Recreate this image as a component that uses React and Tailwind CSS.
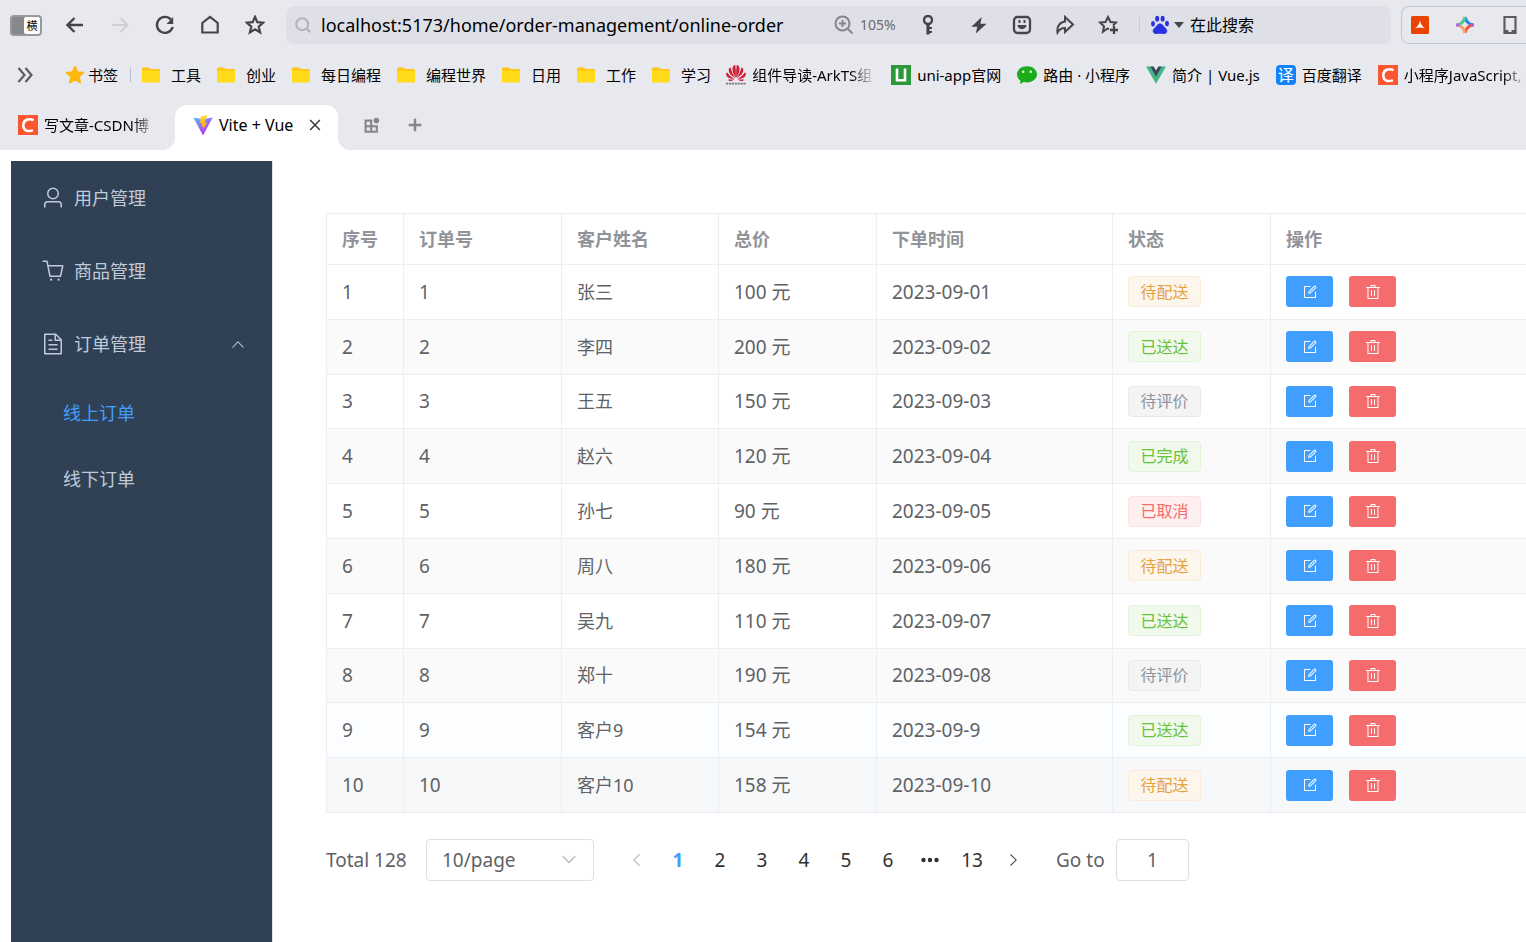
import { useState } from "react";
import clsx from "clsx";

const ORDERS = [
  { name: "张三", price: 100, date: "2023-09-01", status: "待配送" },
  { name: "李四", price: 200, date: "2023-09-02", status: "已送达" },
  { name: "王五", price: 150, date: "2023-09-03", status: "待评价" },
  { name: "赵六", price: 120, date: "2023-09-04", status: "已完成" },
  { name: "孙七", price: 90, date: "2023-09-05", status: "已取消" },
  { name: "周八", price: 180, date: "2023-09-06", status: "待配送" },
  { name: "吴九", price: 110, date: "2023-09-07", status: "已送达" },
  { name: "郑十", price: 190, date: "2023-09-08", status: "待评价" },
  { name: "客户9", price: 154, date: "2023-09-9", status: "已送达" },
  { name: "客户10", price: 158, date: "2023-09-10", status: "待配送" },
];

const TAG_STYLES = {
  待配送: "bg-[#fdf6ec] border-[#faecd8] text-[#e6a23c]",
  已送达: "bg-[#f0f9eb] border-[#e1f3d8] text-[#67c23a]",
  已完成: "bg-[#f0f9eb] border-[#e1f3d8] text-[#67c23a]",
  待评价: "bg-[#f4f4f5] border-[#e9e9eb] text-[#909399]",
  已取消: "bg-[#fef0f0] border-[#fde2e2] text-[#f56c6c]",
};

const ICONS = {
  user: "M512 512a192 192 0 1 0 0-384 192 192 0 0 0 0 384zm0 64a256 256 0 1 1 0-512 256 256 0 0 1 0 512zm320 320v-96a96 96 0 0 0-96-96H288a96 96 0 0 0-96 96v96a32 32 0 1 1-64 0v-96a160 160 0 0 1 160-160h448a160 160 0 0 1 160 160v96a32 32 0 1 1-64 0z",
  cart: "M432 928a48 48 0 1 1 0-96 48 48 0 0 1 0 96zm320 0a48 48 0 1 1 0-96 48 48 0 0 1 0 96zM96 128a32 32 0 0 1 0-64h160a32 32 0 0 1 31.36 25.728L320.64 256H928a32 32 0 0 1 31.296 38.72l-96 448A32 32 0 0 1 832 768H384a32 32 0 0 1-31.36-25.728L229.76 128H96zm314.24 576h395.904l82.304-384H333.44l76.8 384z",
  document: "M832 384H576V128H192v768h640V384zm-26.496-64L640 154.496V320h165.504zM160 64h480l256 256v608a32 32 0 0 1-32 32H160a32 32 0 0 1-32-32V96a32 32 0 0 1 32-32zm160 448h384v64H320v-64zm0-192h160v64H320v-64zm0 384h384v64H320v-64z",
  arrowUp: "m488.832 344.32-339.84 356.672a32 32 0 0 0 0 44.16l.384.384a29.44 29.44 0 0 0 42.688 0l320-335.872 319.872 335.872a29.44 29.44 0 0 0 42.688 0l.384-.384a32 32 0 0 0 0-44.16L535.168 344.32a32 32 0 0 0-46.336 0z",
  edit: "M832 512a32 32 0 1 1 64 0v352a32 32 0 0 1-32 32H160a32 32 0 0 1-32-32V160a32 32 0 0 1 32-32h352a32 32 0 0 1 0 64H192v640h640V512zm-362.048 42.24 52.8-7.552L847.104 222.4a32 32 0 1 0-45.248-45.248L477.44 501.44l-7.552 52.8zm422.4-422.4a96 96 0 0 1 0 135.808l-331.84 331.84a32 32 0 0 1-18.112 9.088L436.8 623.68a32 32 0 0 1-36.224-36.224l15.104-105.6a32 32 0 0 1 9.024-18.112l331.904-331.84a96 96 0 0 1 135.744 0z",
  trash: "M160 256H96a32 32 0 0 1 0-64h256V95.936a32 32 0 0 1 32-32h256a32 32 0 0 1 32 32V192h256a32 32 0 1 1 0 64h-64v672a32 32 0 0 1-32 32H192a32 32 0 0 1-32-32V256zm448-64v-64H416v64h192zM224 896h576V256H224v640zm192-128a32 32 0 0 1-32-32V416a32 32 0 0 1 64 0v320a32 32 0 0 1-32 32zm192 0a32 32 0 0 1-32-32V416a32 32 0 0 1 64 0v320a32 32 0 0 1-32 32z",
};

const Icon = ({ name, className }) => (
  <svg viewBox="0 0 1024 1024" fill="currentColor" className={clsx("shrink-0", className)} aria-hidden="true">
    <path d={ICONS[name]} />
  </svg>
);

// 20px stroked glyphs used in the browser bar
const Glyph = ({ children, className = "size-5", width = 2 }) => (
  <svg viewBox="0 0 20 20" fill="none" stroke="currentColor" strokeWidth={width} className={clsx("shrink-0", className)} aria-hidden="true">
    {children}
  </svg>
);

const STAR = "M10 1.8l2.3 5.4 5.9.5-4.5 3.9 1.4 5.8-5.1-3.1-5.1 3.1 1.4-5.8L1.8 7.7l5.9-.5z";

const FolderIcon = () => (
  <svg viewBox="0 0 20 20" className="size-5 shrink-0" aria-hidden="true">
    <path d="M1 4a1.500 1.500 0 0 1 1.500-1.500h5L9.500 4H17.500A1.500 1.500 0 0 1 19 5.500V8H1z" fill="#ffc20e" />
    <rect x="1" y="5.500" width="18" height="12" rx="1.200" fill="#ffdb1a" />
  </svg>
);

const HuaweiIcon = () => (
  <svg viewBox="0 0 20 20" className="size-5 shrink-0" aria-hidden="true">
    <g fill="#cf1f35">
      <path d="M9.700 13C7 9 6.200 6 6.600 2.500 7 .8 8 .2 9.200 0c.6 3 .8 8 .5 13z" />
      <path d="M10.300 13C13 9 13.800 6 13.400 2.500 13 .8 12 .2 10.800 0c-.6 3-.8 8-.5 13z" />
      <path d="M9.100 13.300C4.500 10.500 2.500 7.500 2.700 4.800c.1-1.300.9-2.200 1.700-2.600C5.500 6 7 10 9.100 13.300z" />
      <path d="M10.900 13.300c4.600-2.800 6.600-5.800 6.400-8.500-.1-1.300-.9-2.200-1.700-2.600C14.500 6 13 10 10.900 13.300z" />
      <path d="M8.600 14C4 13.800 1.200 12.600.4 10.500c-.5-1.500 0-2.700.5-3.300C3 10 5.700 12.500 8.600 14z" />
      <path d="M11.400 14c4.600-.2 7.400-1.400 8.200-3.500.5-1.500 0-2.700-.5-3.300-2.100 2.800-4.800 5.300-7.700 6.800z" />
      <path d="M8.400 14.600H1.900c.8 1.300 2 1.700 3.300 1.400 1-.2 2.300-.9 3.200-1.400zM11.600 14.600h6.500c-.8 1.300-2 1.700-3.300 1.400-1-.2-2.300-.9-3.200-1.400z" />
    </g>
    <path d="M0 18.700h20" stroke="#77787c" strokeWidth="1.800" strokeDasharray="2.200 .7" />
  </svg>
);

const UniIcon = () => (
  <svg viewBox="0 0 20 20" className="size-5 shrink-0" aria-hidden="true">
    <path fill="#2b9939" d="M0 0h20v20H0z" />
    <path d="M6 3.500v11.800h8V3.500" fill="none" stroke="#fff" strokeWidth="2.600" />
  </svg>
);

const WechatIcon = () => (
  <svg viewBox="0 0 20 20" className="size-5 shrink-0" aria-hidden="true">
    <path fill="#1aad19" d="M10 1.200c5.500 0 10 3.500 10 8.100s-4.500 8.100-10 8.100c-1.200 0-2.300-.2-3.300-.4L3 19l.5-3.200C1.400 14.300 0 12 0 9.300c0-4.600 4.500-8.100 10-8.100z" />
    <circle cx="6.300" cy="6.800" r="1.200" fill="#fff" />
    <circle cx="13.700" cy="6.800" r="1.200" fill="#fff" />
  </svg>
);

const VueIcon = () => (
  <svg viewBox="0 0 20 20" className="size-5 shrink-0" aria-hidden="true">
    <path d="M0 1.500h4l6 10.400 6-10.400h4L10 18.800z" fill="#41b883" />
    <path d="M4 1.500h3.700L10 5.500l2.300-4H16L10 11.900z" fill="#34495e" />
  </svg>
);

const TranslateIcon = () => (
  <span className="flex size-5 shrink-0 items-center justify-center rounded-sm bg-[#1283fa] text-base leading-none text-white">译</span>
);

const CsdnIcon = () => (
  <svg viewBox="0 0 20 20" className="size-5 shrink-0" aria-hidden="true">
    <path fill="#fc5531" d="M0 0h20v20H0z" />
    <path d="M15.600 5.200C11 2.800 5.300 4.700 5.200 10.300c0 5.400 5.200 7 9.700 4.800" fill="none" stroke="#fff" strokeWidth="2.500" />
  </svg>
);

const ViteIcon = () => (
  <svg viewBox="0 0 20 20" className="size-5 shrink-0" aria-hidden="true">
    <defs>
      <linearGradient id="vite-v" x1="0" y1="0" x2="12" y2="18" gradientUnits="userSpaceOnUse">
        <stop stopColor="#41d1ff" />
        <stop offset="1" stopColor="#bd34fe" />
      </linearGradient>
      <linearGradient id="vite-bolt" x1="9" y1="0" x2="11" y2="14" gradientUnits="userSpaceOnUse">
        <stop stopColor="#ffdd35" />
        <stop offset="1" stopColor="#ffa800" />
      </linearGradient>
    </defs>
    <path d="M.3 2.500 10 4.200l9.700-1.700L10.400 19.700a.5.5 0 0 1-.8 0z" fill="url(#vite-v)" />
    <path d="M14.300.2 7.600 1.500 7.200 8.800l2.200-.5-.6 3.600 1.800-.5-.9 4.300 4.400-8.200-2.500.5z" fill="url(#vite-bolt)" />
  </svg>
);

const BOOKMARKS = [
  { label: "组件导读-ArkTS组", icon: HuaweiIcon, clip: true },
  { label: "uni-app官网", icon: UniIcon },
  { label: "路由 · 小程序", icon: WechatIcon },
  { label: "简介 | Vue.js", icon: VueIcon },
  { label: "百度翻译", icon: TranslateIcon },
  { label: "小程序JavaScript,", icon: CsdnIcon, clip: true },
];

const FOLDERS = ["工具", "创业", "每日编程", "编程世界", "日用", "工作", "学习"];

const FADE = "overflow-hidden [mask-image:linear-gradient(to_right,black_80%,transparent)]";

function NavButton({ label, className, children }) {
  return (
    <button type="button" aria-label={label} className={clsx("flex h-9 w-[45px] items-center justify-center", className)}>
      {children}
    </button>
  );
}

function ToolButton({ label, children }) {
  return (
    <button type="button" aria-label={label} className="flex h-9 w-[43px] shrink-0 items-center justify-center">
      {children}
    </button>
  );
}

function AddressBar() {
  return (
    <div className="flex h-[38px] min-w-0 flex-1 items-center rounded-lg bg-[#dfe0e7] pl-[9px]">
      <Glyph className="size-4 text-[#b0b1b7]" width={2.4}>
        <circle cx="9" cy="9" r="7.500" />
        <path d="m14 14 5 5" />
      </Glyph>
      <input
        aria-label="地址"
        defaultValue="localhost:5173/home/order-management/online-order"
        className="ml-2.5 min-w-0 flex-1 bg-transparent text-lg text-black outline-none"
      />
      <Glyph className="size-5 text-[#85868b]">
        <circle cx="8.500" cy="8.500" r="7" />
        <path d="m13.500 13.500 5 5M5 8.500h7M8.500 5v7" />
      </Glyph>
      <span className="ml-1.5 mr-1.5 w-10 text-sm text-[#6a6b70]">105%</span>
      <ToolButton label="密码">
        <Glyph>
          <circle cx="10" cy="5" r="4" strokeWidth="2.400" />
          <path d="M10 9v10.500" strokeWidth="3.200" />
          <path d="M10 13h4M10 17h4" strokeWidth="2.200" />
        </Glyph>
      </ToolButton>
      <span className="w-2 shrink-0" />
      <ToolButton label="加速">
        <Glyph className="size-[18px]">
          <path d="M13 1 1.500 12h6.500l-1.500 7.500L18.500 8.500h-7z" fill="currentColor" stroke="none" />
        </Glyph>
      </ToolButton>
      <ToolButton label="表情">
        <Glyph>
          <rect x="2" y="2" width="16" height="16" rx="3.500" strokeWidth="2.300" />
          <path d="M5.500 10h9c0 5.500-9 5.500-9 0z" fill="currentColor" stroke="none" />
          <path d="M7.500 5v3M12.500 5v3" />
        </Glyph>
      </ToolButton>
      <ToolButton label="分享">
        <Glyph>
          <path d="M10 2 18 9.500 10 17V13C7 13 4.500 14 2.500 17.500c-1-6 2.500-10.500 7.500-11z" />
        </Glyph>
      </ToolButton>
      <ToolButton label="收藏">
        <Glyph>
          <path d="M11 14 9.500 13.500l-4.500 3.300 1-5.500L2 7.500l5.500-.5L10 2l2.500 5 5.500.5-3 3" />
          <path d="M16 11v8M12 15h8" strokeWidth="2.300" />
        </Glyph>
      </ToolButton>
      <span className="mx-2.5 h-4 w-px shrink-0 bg-[#c8cad6]" />
      <button type="button" aria-label="搜索引擎" className="flex shrink-0 items-center gap-1">
        <svg viewBox="0 0 20 20" className="size-5" fill="#2932e1" aria-hidden="true">
          <ellipse cx="3" cy="8.700" rx="2" ry="2.700" />
          <ellipse cx="7.200" cy="3.700" rx="2" ry="2.900" />
          <ellipse cx="12.600" cy="3.700" rx="2" ry="2.900" />
          <ellipse cx="17" cy="8.500" rx="2" ry="2.700" />
          <path d="M10 8.500c2.500 0 3 2 4.500 3.500s3 2.500 2.700 4.500c-.3 2-2.200 2.700-4 2.400-2-.3-4.400-.3-6.400 0-1.800.3-3.700-.4-4-2.400-.3-2 1.200-3 2.700-4.500S7.500 8.500 10 8.500z" />
        </svg>
        <svg viewBox="0 0 10 6" className="h-1.5 w-2.5" fill="#454549" aria-hidden="true">
          <path d="M0 0h10L5 6z" />
        </svg>
      </button>
      <input
        aria-label="搜索"
        placeholder="在此搜索"
        className="ml-1.5 w-[201px] shrink bg-transparent text-base text-black outline-none placeholder:text-black"
      />
    </div>
  );
}

function BrowserChrome() {
  return (
    <header className="overflow-hidden bg-[#e8e9ee] text-[#454549]">
      <div className="flex h-[50px] items-center">
        <button type="button" className="ml-2.5 flex h-[21px] w-8 items-center justify-end rounded-[4px] border-2 border-[#98999d] bg-[#87888c] text-[11px] leading-none text-black">
          <span className="flex h-full w-4 items-center justify-center rounded-[2px] bg-white">横</span>
        </button>
        <nav className="ml-2.5 flex" aria-label="导航">
          <NavButton label="后退">
            <Glyph width={2.4}>
              <path d="M18 10H3M9.500 3 2.500 10l7 7" />
            </Glyph>
          </NavButton>
          <NavButton label="前进" className="text-[#cfd0d4]">
            <Glyph>
              <path d="M2 10h15M10.500 3l7 7-7 7" />
            </Glyph>
          </NavButton>
          <NavButton label="刷新">
            <Glyph width={2.4}>
              <path d="M17.700 12A8 8 0 1 1 16 4.600" />
              <path d="M18.200 2v7H11.500z" fill="currentColor" stroke="none" />
            </Glyph>
          </NavButton>
          <NavButton label="主页">
            <Glyph width={2.2}>
              <path d="M2.300 17.500V8L10 2l7.700 6v9.500z" />
            </Glyph>
          </NavButton>
          <NavButton label="收藏夹">
            <Glyph width={2.2}>
              <path d={STAR} />
            </Glyph>
          </NavButton>
        </nav>
        <span className="w-[9px] shrink-0" />
        <AddressBar />
        <div className="ml-2.5 flex h-[38px] w-[125px] shrink-0 items-center gap-[25px] rounded-l-lg border border-r-0 border-[#c3c5d6] pl-2">
          <svg viewBox="0 0 20 20" className="size-5 shrink-0" aria-hidden="true">
            <rect x="1" y="1" width="18" height="18" rx="1.500" fill="#eb4402" />
            <path d="M10 5c.5 4 2 6 5 8.500-3.300-1.500-6.700-1.500-10 0C8 11 9.500 9 10 5z" fill="#fff" />
          </svg>
          <svg viewBox="0 0 20 20" className="size-5 shrink-0" fill="none" strokeWidth="3" aria-hidden="true">
            <path d="M10 2c.8 4 4 7.200 8 8" stroke="#2f7df0" />
            <path d="M18 10c-4 .8-7.200 4-8 8" stroke="#f0564a" />
            <path d="M10 18c-.8-4-4-7.200-8-8" stroke="#f5a26b" />
            <path d="M2 10c4-.8 7.200-4 8-8" stroke="#4cc987" />
            <path d="M1 10h3" stroke="#b068ea" />
            <path d="M16 10h3" stroke="#b45be0" />
          </svg>
          <Glyph className="size-5 text-[#5c5d62]" width={2.2}>
            <path d="M4.500 2h11v16h-11z" />
            <path d="M4 16.500h4.500M11.500 16.500H16" strokeWidth="3" />
          </Glyph>
        </div>
      </div>

      <div className="flex h-[50px] items-center text-[15px] whitespace-nowrap text-black">
        <button type="button" aria-label="展开" className="ml-4 text-[#5c5d62]">
          <Glyph width={2.2}>
            <path d="m2.500 3 6 7-6 7M9.500 3l6 7-6 7" />
          </Glyph>
        </button>
        <a href="#bookmarks" className="ml-[29px] flex items-center gap-[3px]">
          <Glyph>
            <path d={STAR} fill="#ffb90f" stroke="#ffb90f" strokeLinejoin="round" />
          </Glyph>
          书签
        </a>
        <span className="mr-2.5 ml-3 h-3.5 w-px shrink-0 bg-[#b9bfd0]" />
        <div className="flex shrink-0 gap-[15px] pr-[15px]">
          {FOLDERS.map((label) => (
            <button key={label} type="button" className="flex items-center gap-2.5">
              <FolderIcon />
              {label}
            </button>
          ))}
        </div>
        <div className="flex gap-4">
          {BOOKMARKS.map(({ label, icon: SiteIcon, clip }) => (
            <a key={label} href="#site" className="flex shrink-0 items-center gap-1.5">
              <SiteIcon />
              <span className={clsx(clip && "w-[123px]", clip && FADE)}>{label}</span>
            </a>
          ))}
        </div>
      </div>

      <div className="flex h-[50px] items-end text-[15px] whitespace-nowrap text-black">
        <button type="button" className="flex h-[50px] w-[175px] items-center gap-1.5 pl-[18px]">
          <CsdnIcon />
          <span className={clsx("w-[112px] text-left", FADE)}>写文章-CSDN博</span>
        </button>
        <div className="relative flex h-[45px] w-[163px] items-center rounded-t-xl bg-white pb-[5px] pl-[18px]">
          <span className="absolute bottom-0 -left-3 size-3 bg-[radial-gradient(circle_at_top_left,transparent_12px,white_12px)]" />
          <span className="absolute -right-3 bottom-0 size-3 bg-[radial-gradient(circle_at_top_right,transparent_12px,white_12px)]" />
          <ViteIcon />
          <span className="ml-1.5 w-[89px] text-base">Vite + Vue</span>
          <button type="button" aria-label="关闭标签页" className="text-[#333]">
            <Glyph className="size-3.5">
              <path d="m3 3 14 14M17 3 3 17" />
            </Glyph>
          </button>
        </div>
        <button type="button" aria-label="标签组" className="ml-[26px] flex h-[50px] items-center text-[#85868b]">
          <Glyph className="size-4" width={2.6}>
            <path d="M2 4.500h7v7H2zM2 11.500h7v7H2zM9 11.500h7v7H9z" />
            <circle cx="15.500" cy="4.500" r="3.500" fill="currentColor" stroke="none" />
          </Glyph>
        </button>
        <button type="button" aria-label="新标签页" className="ml-7 flex h-[50px] items-center text-[#85868b]">
          <Glyph className="size-3.5" width={3.5}>
            <path d="M10 1v18M1 10h18" />
          </Glyph>
        </button>
      </div>
    </header>
  );
}

function Sidebar() {
  const [open, setOpen] = useState(true);
  const item = "flex h-[73px] w-full items-center gap-[9px] pl-[30px] pr-[26px] text-left";

  return (
    <aside className="w-[262px] shrink-0 border-r border-[#dcdfe6] bg-[#304156] text-lg text-[#bfcbd9]">
      <a href="#users" className={item}>
        <Icon name="user" className="size-6" />
        用户管理
      </a>
      <a href="#goods" className={item}>
        <Icon name="cart" className="size-6" />
        商品管理
      </a>
      <button type="button" aria-expanded={open} onClick={() => setOpen(!open)} className={item}>
        <Icon name="document" className="size-6" />
        <span className="flex-1">订单管理</span>
        <Icon name="arrowUp" className={clsx("size-4", !open && "rotate-180")} />
      </button>
      {open && (
        <>
          <a href="#online-order" className="flex h-[66px] items-center pl-[52px] text-[#409eff]">
            线上订单
          </a>
          <a href="#offline-order" className="flex h-[66px] items-center pl-[52px]">
            线下订单
          </a>
        </>
      )}
    </aside>
  );
}

function OrderTable() {
  const cell = "border-r border-b border-[#ebeef5] px-[15px] py-0 last:border-r-0";

  return (
    <table className="h-[600px] w-full table-fixed border-separate border-spacing-0 border-t border-l border-[#ebeef5] text-[19px] leading-6 text-[#606266]">
      <colgroup>
        <col className="w-[77px]" />
        <col className="w-[158px]" />
        <col className="w-[157px]" />
        <col className="w-[158px]" />
        <col className="w-[236px]" />
        <col className="w-[158px]" />
        <col />
      </colgroup>
      <thead>
        <tr className="h-[51px] text-left text-lg text-[#909399]">
          {["序号", "订单号", "客户姓名", "总价", "下单时间", "状态", "操作"].map((title) => (
            <th key={title} className={clsx(cell, "font-bold")}>
              {title}
            </th>
          ))}
        </tr>
      </thead>
      <tbody>
        {ORDERS.map((order, i) => (
          <tr key={order.date} className={clsx("h-[54px]", i === 9 ? "bg-[#f7f8fa]" : i === 8 ? "bg-[#fcfdff]" : i % 2 === 1 && "bg-[#fafafa]")}>
            <td className={cell}>{i + 1}</td>
            <td className={cell}>{i + 1}</td>
            <td className={clsx(cell, "text-lg")}>{order.name}</td>
            <td className={cell}>{order.price} 元</td>
            <td className={cell}>{order.date}</td>
            <td className={cell}>
              <span className={clsx("flex h-[31px] w-[73px] items-center justify-center rounded-[4px] border text-base", TAG_STYLES[order.status])}>
                {order.status}
              </span>
            </td>
            <td className={cell}>
              <div className="flex gap-4">
                <button type="button" aria-label="编辑" className="flex h-[31px] w-[47px] items-center justify-center rounded-[3px] bg-[#409eff] text-white">
                  <Icon name="edit" className="size-4" />
                </button>
                <button type="button" aria-label="删除" className="flex h-[31px] w-[47px] items-center justify-center rounded-[3px] bg-[#f56c6c] text-white">
                  <Icon name="trash" className="size-4" />
                </button>
              </div>
            </td>
          </tr>
        ))}
      </tbody>
    </table>
  );
}

function Pagination() {
  const [page, setPage] = useState(1);
  const pageBtn = "flex h-[42px] w-[42px] items-center justify-center";

  return (
    <div className="mt-[26px] flex items-center text-[19px] whitespace-nowrap text-[#606266]">
      <span className="w-[100px]">Total 128</span>
      <div className="relative mr-[21px] w-[168px]">
        <select aria-label="每页条数" className="h-[42px] w-full appearance-none rounded-[4px] border border-[#dcdfe6] bg-white pl-[15px] outline-none">
          <option>10/page</option>
          <option>20/page</option>
          <option>50/page</option>
        </select>
        <Icon name="arrowUp" className="pointer-events-none absolute top-3 right-4 size-[18px] rotate-180 text-[#a8abb2]" />
      </div>
      <button type="button" aria-label="上一页" disabled className={pageBtn}>
        <Icon name="arrowUp" className="size-4 -rotate-90 text-[#a8abb2]" />
      </button>
      {[1, 2, 3, 4, 5, 6].map((n) => (
        <button
          key={n}
          type="button"
          onClick={() => setPage(n)}
          className={clsx(pageBtn, n === page ? "font-bold text-[#409eff]" : "text-[#303133]")}
        >
          {n}
        </button>
      ))}
      <button type="button" aria-label="更多" className={clsx(pageBtn, "text-[#303133]")}>
        <svg viewBox="0 0 18 6" className="h-1.5 w-[18px]" fill="currentColor" aria-hidden="true">
          <circle cx="2.500" cy="3" r="2.200" />
          <circle cx="9" cy="3" r="2.200" />
          <circle cx="15.500" cy="3" r="2.200" />
        </svg>
      </button>
      <button type="button" onClick={() => setPage(13)} className={clsx(pageBtn, page === 13 ? "font-bold text-[#409eff]" : "text-[#303133]")}>
        13
      </button>
      <button type="button" aria-label="下一页" className={pageBtn}>
        <Icon name="arrowUp" className="size-4 rotate-90 text-[#303133]" />
      </button>
      <label htmlFor="goto" className="ml-[21px] w-[60px]">
        Go to
      </label>
      <input id="goto" defaultValue="1" className="h-[42px] w-[73px] rounded-[4px] border border-[#dcdfe6] text-center outline-none" />
    </div>
  );
}

export default function App() {
  return (
    <div className="flex min-h-screen flex-col bg-white font-['Noto_Sans','Noto_Sans_CJK_SC',sans-serif]">
      <BrowserChrome />
      <div className="flex flex-1 pt-[11px] pl-[11px]">
        <Sidebar />
        <main className="min-w-0 flex-1 overflow-hidden pt-[52px] pl-[53px]">
          <OrderTable />
          <Pagination />
        </main>
      </div>
    </div>
  );
}
